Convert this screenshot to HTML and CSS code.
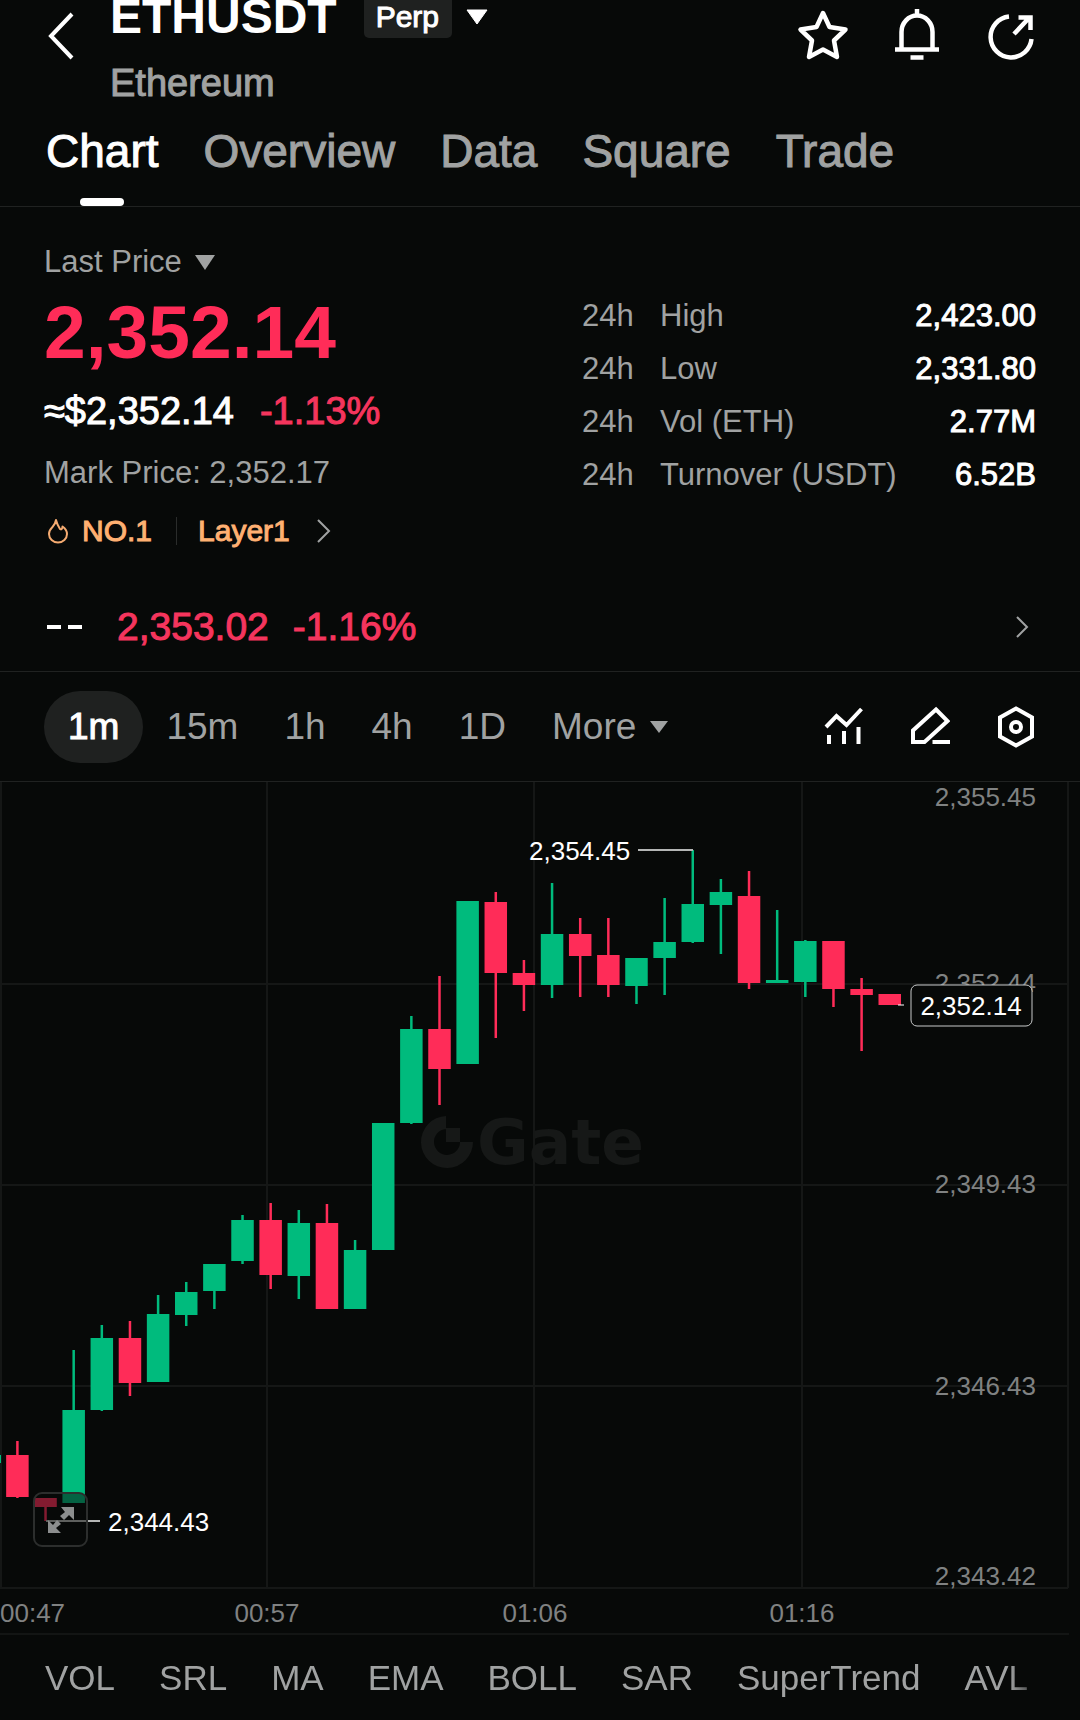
FILE: index.html
```html
<!DOCTYPE html>
<html lang="en">
<head>
    <meta charset="UTF-8">
    <meta name="viewport" content="width=device-width, initial-scale=1.0">
    <title>ETHUSDT Perp</title>
    <link rel="stylesheet" href="styles.css">
</head>
<body>
    <header class="header">
        <button class="icon-button back" aria-label="Back">
            <svg width="30" height="50" viewBox="0 0 30 50"><path d="M26 3 L5 25 L26 47" fill="none" stroke="#fff" stroke-width="4"/></svg>
        </button>
        <div class="pair">
            <div class="pair-row">
                <h1>ETHUSDT</h1>
                <span class="badge">Perp</span>
                <button class="icon-button pair-caret" aria-label="Change pair">
                    <svg width="22" height="16" viewBox="0 0 22 16"><path d="M1 1 H21 L11 15 Z" fill="#fff" stroke="#fff" stroke-linejoin="round"/></svg>
                </button>
            </div>
            <p class="pair-name">Ethereum</p>
        </div>
        <div class="header-actions">
            <button class="icon-button" aria-label="Favorite">
                <svg width="52" height="54" viewBox="0 0 52 54"><path d="M26 4 L32.5 18 L48.500 20.500 L37 31.500 L40 48 L26 40.500 L12 48 L15 31.500 L3.500 20.500 L19.500 18 Z" fill="none" stroke="#fff" stroke-width="4.500" stroke-linejoin="round"/></svg>
            </button>
            <button class="icon-button" aria-label="Alerts">
                <svg width="52" height="54" viewBox="0 0 52 54"><path d="M10.500 40 V23 A15.500 16.500 0 0 1 41.500 23 V40 M4 40.500 H48 M26 0 V7 M19.500 48.500 H32.500" fill="none" stroke="#fff" stroke-width="4.500"/></svg>
            </button>
            <button class="icon-button" aria-label="Share">
                <svg width="52" height="54" viewBox="0 0 52 54"><path d="M24 7.500 A20.500 20.500 0 1 0 46.500 30 M29 25 L44 9 M33.500 8.500 H45.500 V21" fill="none" stroke="#fff" stroke-width="4.500"/></svg>
            </button>
        </div>
    </header>

    <nav class="tabs">
        <a class="tab active" href="#chart">Chart</a>
        <a class="tab" href="#overview">Overview</a>
        <a class="tab" href="#data">Data</a>
        <a class="tab" href="#square">Square</a>
        <a class="tab" href="#trade">Trade</a>
    </nav>

    <main>
        <section class="summary">
            <div class="quote">
                <button class="price-type">Last Price
                    <svg width="20" height="15" viewBox="0 0 20 15"><path d="M0 0 H20 L10 15 Z" fill="#a0a2a2"/></svg>
                </button>
                <p class="price">2,352.14</p>
                <p class="fiat"><span>≈$2,352.14</span><span class="down">-1.13%</span></p>
                <p class="mark">Mark Price: 2,352.17</p>
                <a class="tags" href="#rank">
                    <svg class="flame" width="22" height="26" viewBox="0 0 22 26"><path d="M9 2 C10 6 11 8 13 11 C14.500 12 15.500 10.500 15.500 8.500 C19 11 20 14 20 16 A9 8.500 0 0 1 2 16 C2 12 4 10.500 5.500 9 C7.500 7 8.500 5 9 2 Z" fill="none" stroke="#f5ab71" stroke-width="2" stroke-linejoin="round"/></svg>
                    <span>NO.1</span>
                    <span class="tag-next">Layer1</span>
                    <svg width="16" height="26" viewBox="0 0 16 26"><path d="M2 2 L13 13 L2 24" fill="none" stroke="#a0a2a2" stroke-width="2"/></svg>
                </a>
            </div>
            <table class="stats">
                <tr><th class="period">24h</th><th>High</th><td>2,423.00</td></tr>
                <tr><th class="period">24h</th><th>Low</th><td>2,331.80</td></tr>
                <tr><th class="period">24h</th><th>Vol (ETH)</th><td>2.77M</td></tr>
                <tr><th class="period">24h</th><th>Turnover (USDT)</th><td>6.52B</td></tr>
            </table>
        </section>

        <a class="index-row" href="#index">
            <span class="dashes"><i></i><i></i></span>
            <span class="down">2,353.02</span>
            <span class="down index-change">-1.16%</span>
            <svg class="index-arrow" width="16" height="24" viewBox="0 0 16 24"><path d="M2 2 L12 12 L2 22" fill="none" stroke="#a0a2a2" stroke-width="2"/></svg>
        </a>

        <div class="toolbar">
            <button class="range active">1m</button>
            <button class="range">15m</button>
            <button class="range">1h</button>
            <button class="range">4h</button>
            <button class="range">1D</button>
            <button class="range">More
                <svg width="18" height="12" viewBox="0 0 18 12"><path d="M0 0 H18 L9 12 Z" fill="#a0a2a2"/></svg>
            </button>
            <div class="tools">
                <button class="icon-button" aria-label="Indicators">
                    <svg width="40" height="44" viewBox="0 0 40 44"><path d="M2 22 L12.500 11 L22.500 20 L37.500 4 M5 30 V39 M20 26 V39 M34.500 22 V39" fill="none" stroke="#fff" stroke-width="4"/></svg>
                </button>
                <button class="icon-button" aria-label="Draw">
                    <svg width="40" height="44" viewBox="0 0 40 44"><path d="M26 4.500 L37.500 16 L14.500 37 H3 V25.500 Z M22.500 37 H40" fill="none" stroke="#fff" stroke-width="4"/></svg>
                </button>
                <button class="icon-button" aria-label="Chart settings">
                    <svg width="40" height="44" viewBox="0 0 40 44"><path d="M20 3.500 L36 12.500 V31.500 L20 40.500 L4 31.500 V12.500 Z" fill="none" stroke="#fff" stroke-width="4"/><circle cx="20" cy="22" r="5" fill="none" stroke="#fff" stroke-width="4"/></svg>
                </button>
            </div>
        </div>

        <div class="chart" id="chart">
            <svg class="chart-svg" viewBox="0 0 1080 853">
                <path class="grid" d="M1 0 V806 M267 0 V806 M534 0 V806 M802 0 V806 M1068 0 V806 M0 202 H1068 M0 403 H1068 M0 604 H1068 M0 806 H1068"/>
                <path class="axis-line" d="M0 852 H1069"/>

                <g class="watermark">
                    <path d="M446 334 V347 A13 13 0 1 0 460 360 H473 A26 26 0 1 1 446 334 Z M446 346 H460 V360 H446 Z"/>
                    <text x="477" y="382">Gate</text>
                </g>

                <g class="axis-text" text-anchor="end">
                    <text x="1036" y="24">2,355.45</text>
                    <text x="1036" y="210">2,352.44</text>
                    <text x="1036" y="411">2,349.43</text>
                    <text x="1036" y="613">2,346.43</text>
                    <text x="1036" y="803">2,343.42</text>
                </g>
                <g class="axis-text">
                    <text x="0" y="840">00:47</text>
                    <text x="267" y="840" text-anchor="middle">00:57</text>
                    <text x="535" y="840" text-anchor="middle">01:06</text>
                    <text x="802" y="840" text-anchor="middle">01:16</text>
                </g>

                <g id="candles"></g>

                <path class="marker-line" d="M638 68 H693 M46 739 H100"/>
                <text class="marker-text" x="529" y="78">2,354.45</text>
                <text class="marker-text" x="108" y="749">2,344.43</text>

                <path class="last-line" d="M898 223 H904"/>
                <rect class="last-box" x="911" y="203" width="121" height="41" rx="6"/>
                <text class="marker-text" x="971" y="233" text-anchor="middle">2,352.14</text>
            </svg>
            <button class="expand" aria-label="Full screen">
                <svg width="28" height="28" viewBox="0 0 28 28"><path d="M14 1 H27 V14 L22 9 L17 14 L13 10 L18 6 Z M1 14 L6 19 L10 14 L14 18 L9 22 L14 27 H1 Z" fill="#8c8e8e"/></svg>
            </button>
        </div>

        <div class="indicators">
            <button>VOL</button>
            <button>SRL</button>
            <button>MA</button>
            <button>EMA</button>
            <button>BOLL</button>
            <button>SAR</button>
            <button>SuperTrend</button>
            <button>AVL</button>
        </div>
    </main>

    <script src="chart.js"></script>
</body>
</html>
```
FILE: styles.css
```css
* {
    box-sizing: border-box;
}

body {
    margin: 0;
    background-color: #070908;
    color: #fff;
    font-family: "Liberation Sans", Arial, sans-serif;
    font-size: 31px;
    line-height: 40px;
}

h1, p {
    margin: 0;
}

a {
    color: inherit;
    text-decoration: none;
}

button {
    padding: 0;
    border: 0;
    background: none;
    color: inherit;
    font: inherit;
    cursor: pointer;
}

svg {
    display: block;
}

.down {
    color: #f5355d;
}

/* header */

.header {
    display: flex;
    align-items: flex-start;
    padding: 0 43px 0 44px;
}

.back {
    margin: 11px 34px 0 2px;
}

.pair-row {
    display: flex;
    align-items: flex-start;
    height: 38px;
}

.pair-row h1 {
    font-size: 48px;
    line-height: 34px;
}

.badge {
    height: 38px;
    margin-left: 27px;
    padding: 0 13px 0 12px;
    background-color: #1f2120;
    border-radius: 0 0 5px 5px;
    font-size: 30px;
    line-height: 34px;
    -webkit-text-stroke: 1px;
}

.pair-caret {
    margin: 9px 0 0 14px;
}

.pair-name {
    margin-top: 23px;
    color: #a0a2a2;
    font-size: 38px;
    line-height: 44px;
    -webkit-text-stroke: 1px;
}

.header-actions {
    display: flex;
    gap: 42px;
    margin: 9px 0 0 auto;
}

/* tabs */

.tabs {
    display: flex;
    gap: 45px;
    padding: 20px 46px 0;
    border-bottom: 1px solid #202221;
    font-size: 46px;
    line-height: 52px;
}

.tab {
    display: flex;
    flex-direction: column;
    align-items: center;
    height: 81px;
    color: #a0a2a2;
    -webkit-text-stroke: 1px;
}

.tab.active {
    color: #fff;
}

.tab.active::after {
    content: "";
    width: 44px;
    height: 8px;
    margin-top: 21px;
    background-color: #fff;
    border-radius: 4px;
}

/* prices */

.summary {
    display: flex;
    justify-content: space-between;
    padding: 35px 44px 0;
}

.price-type {
    display: flex;
    align-items: center;
    gap: 13px;
    color: #a0a2a2;
}

.price {
    margin-top: 8px;
    color: #ff2c58;
    font-size: 75px;
    font-weight: bold;
    line-height: 84px;
}

.fiat {
    display: flex;
    gap: 26px;
    margin-top: 15px;
    font-size: 38px;
    line-height: 44px;
    -webkit-text-stroke: 1px;
}

.mark {
    margin-top: 20px;
    color: #a0a2a2;
}

.tags {
    display: flex;
    align-items: center;
    margin-top: 18px;
    color: #ffb072;
    font-size: 30px;
    -webkit-text-stroke: 1px;
}

.flame {
    margin: 0 13px 0 3px;
}

.tag-next {
    margin: 0 26px 0 24px;
    padding-left: 22px;
    background: linear-gradient(#2a2c2b, #2a2c2b) left center / 1px 28px no-repeat;
}

.stats {
    width: 454px;
    margin-top: 47px;
    border-collapse: collapse;
    align-self: flex-start;
}

.stats th,
.stats td {
    padding: 0;
    line-height: 53px;
}

.stats th {
    color: #a0a2a2;
    font-weight: normal;
    text-align: left;
}

.stats .period {
    width: 78px;
}

.stats td {
    text-align: right;
    -webkit-text-stroke: 1px;
}

.index-row {
    display: flex;
    align-items: center;
    margin-top: 54px;
    padding: 0 49px 22px 47px;
    border-bottom: 1px solid #202221;
    font-size: 39px;
    line-height: 44px;
    -webkit-text-stroke: 1px;
}

.dashes {
    display: flex;
    gap: 7px;
    margin-right: 35px;
}

.dashes i {
    width: 14px;
    height: 4px;
    background-color: #fff;
}

.index-change {
    margin-left: 24px;
}

.index-arrow {
    margin-left: auto;
}

/* time ranges */

.toolbar {
    display: flex;
    align-items: center;
    height: 110px;
    padding: 0 44px;
    border-bottom: 1px solid #202221;
    font-size: 37px;
}

.range {
    display: flex;
    align-items: center;
    gap: 14px;
    height: 72px;
    padding: 0 23px;
    color: #a0a2a2;
}

.range.active {
    padding: 0 24px;
    background-color: #1f2120;
    border-radius: 36px;
    color: #fff;
    -webkit-text-stroke: 1px;
}

.tools {
    display: flex;
    gap: 46px;
    margin-left: auto;
}

/* chart */

.chart {
    position: relative;
}

.chart-svg {
    width: 100%;
    height: auto;
}

.grid {
    fill: none;
    stroke: #151716;
    stroke-width: 2;
}

.axis-line {
    stroke: #202221;
}

.axis-text {
    fill: #808282;
    font-size: 26px;
}

.marker-text {
    fill: #fff;
    font-size: 26px;
}

.marker-line {
    stroke: #b4b6b5;
    stroke-width: 2;
}

.last-line {
    stroke: #fff;
    stroke-width: 1;
}

.last-box {
    fill: #070908;
    stroke: #c8caca;
}

.watermark {
    fill: #161817;
    font-family: "DejaVu Sans", sans-serif;
    font-size: 63px;
    font-weight: bold;
}

.up-candle {
    fill: #00bb7d;
}

.down-candle {
    fill: #ff2c58;
}

.expand {
    position: absolute;
    left: 33px;
    bottom: 88px;
    display: flex;
    align-items: center;
    justify-content: center;
    width: 55px;
    height: 55px;
    background-color: rgba(7, 9, 8, 0.5);
    border: 2px solid #2c2e2d;
    border-radius: 9px;
}

/* indicators */

.indicators {
    display: flex;
    gap: 44px;
    margin-right: 34px;
    padding: 21px 0 19px 45px;
    overflow: hidden;
    color: #a0a2a2;
    font-size: 35px;
    line-height: 44px;
    -webkit-mask-image: linear-gradient(to left, transparent, #000 36px);
    mask-image: linear-gradient(to left, transparent, #000 36px);
}
```
FILE: chart.js
```js
// [direction, wick top, body top, body bottom, wick bottom]
const candles = [
    ['down', 659, 673, 715, 716],
    ['down', 716, 716, 725, 739],
    ['up', 568, 628, 721, 721],
    ['up', 543, 556, 628, 629],
    ['down', 539, 556, 601, 614],
    ['up', 513, 532, 600, 600],
    ['up', 500, 510, 533, 544],
    ['up', 482, 482, 509, 527],
    ['up', 433, 438, 479, 482],
    ['down', 421, 438, 493, 507],
    ['up', 428, 441, 494, 517],
    ['down', 422, 441, 527, 527],
    ['up', 458, 468, 527, 527],
    ['up', 341, 341, 468, 468],
    ['up', 234, 247, 341, 342],
    ['down', 194, 247, 287, 323],
    ['up', 119, 119, 282, 282],
    ['down', 110, 120, 191, 256],
    ['down', 178, 191, 203, 229],
    ['up', 101, 152, 203, 216],
    ['down', 136, 152, 174, 215],
    ['down', 136, 173, 203, 215],
    ['up', 176, 176, 204, 222],
    ['up', 116, 160, 176, 213],
    ['up', 68, 122, 160, 161],
    ['up', 97, 110, 123, 172],
    ['down', 89, 114, 201, 207],
    ['up', 128, 198, 201, 201],
    ['up', 158, 159, 200, 215],
    ['down', 159, 159, 207, 225],
    ['down', 196, 207, 213, 269],
    ['down', 212, 212, 223, 223]
];

const firstX = 17.4;
const stepX = 28.14;
const bodyWidth = 22.5;
const layer = document.getElementById('candles');

function addRect(className, x, y, width, height) {
    const rect = document.createElementNS('http://www.w3.org/2000/svg', 'rect');
    rect.setAttribute('class', className);
    rect.setAttribute('x', x);
    rect.setAttribute('y', y);
    rect.setAttribute('width', width);
    rect.setAttribute('height', height);
    layer.appendChild(rect);
}

candles.forEach(([direction, wickTop, bodyTop, bodyBottom, wickBottom], index) => {
    const x = firstX + stepX * index;
    addRect(`${direction}-candle`, x - 1.25, wickTop, 2.5, wickBottom - wickTop);
    addRect(`${direction}-candle`, x - bodyWidth / 2, bodyTop, bodyWidth, bodyBottom - bodyTop);
});

// edge of the candle that scrolled off to the left
addRect('up-candle', 0, 673, 1, 8);
```
